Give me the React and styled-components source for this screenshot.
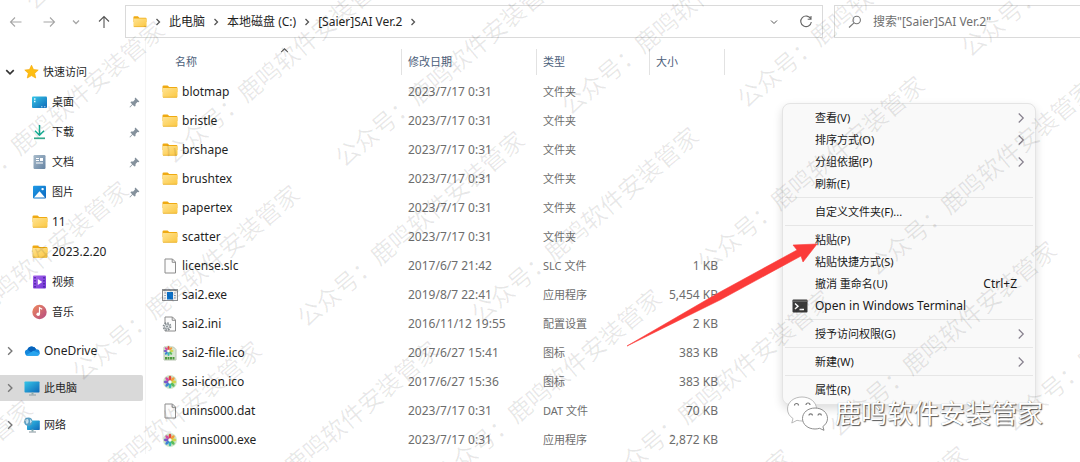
import React from 'react';
import styled, { createGlobalStyle } from 'styled-components';

const GlobalStyle = createGlobalStyle`
  *, *::before, *::after { box-sizing: border-box; }
  html, body { margin: 0; padding: 0; background: #fff; }
  body {
    font-family: "Noto Sans", "Noto Sans CJK SC", sans-serif;
    font-size: 12px;
    line-height: 16px;
    color: #1f1f1f;
  }
  button, input { font: inherit; color: inherit; }
`;

const Window = styled.div`
  position: relative;
  min-height: 100vh;
  overflow: hidden;
  background: #fff;
`;

const Toolbar = styled.header`
  display: flex;
  align-items: center;
  padding-top: 5px;
`;

const NavButtons = styled.nav`
  display: flex;
  flex: none;
  align-items: center;
  width: 125px;
  padding-left: 8px;
  gap: 16px;
`;

const IconButton = styled.button`
  display: inline-flex;
  align-items: center;
  justify-content: center;
  width: ${({ $w }) => $w || 16}px;
  height: 16px;
  padding: 0;
  border: 0;
  background: none;
  color: ${({ $color }) => $color || '#555'};
`;

const AddressBar = styled.div`
  display: flex;
  flex: 1;
  align-items: center;
  height: 33px;
  padding: 0 8px 0 7px;
  border: 1px solid #dadada;
`;

const Crumbs = styled.div`
  display: flex;
  flex: 1;
  align-items: center;
  gap: 7px;
`;

const PathIcon = styled.span`
  display: flex;
  width: 14px;
`;

const Crumb = styled.button`
  padding: 0;
  border: 0;
  background: none;
  white-space: nowrap;
`;

const BarActions = styled.div`
  display: flex;
  gap: 16px;
`;

const SearchBox = styled.label`
  display: flex;
  flex: 0 1 246px;
  align-items: center;
  gap: 10px;
  height: 33px;
  margin-left: 11px;
  padding-left: 12px;
  border: solid #dadada;
  border-width: 1px 0 1px 1px;
`;

const SearchInput = styled.input`
  flex: 1;
  min-width: 0;
  padding: 0;
  border: 0;
  outline: 0;
  background: none;
  &::placeholder { color: #6f6f6f; opacity: 1; }
`;

const Body = styled.div`
  display: flex;
  align-items: stretch;
`;

const Sidebar = styled.aside`
  flex: none;
  width: 146px;
  padding: 19px 2px 0 0;
  border-right: 1px solid #f5f5f5;
`;

const SideLink = styled.a`
  display: flex;
  align-items: center;
  gap: 4px;
  height: 30px;
  padding-left: ${({ $child }) => ($child ? 32 : 4)}px;
  padding-right: 3px;
  color: inherit;
  font-size: ${({ $latin }) => ($latin ? 12 : 11)}px;
  text-decoration: none;
`;

const RootLink = styled(SideLink)`
  height: 26px;
  margin-top: 11px;
  border-radius: 0 2px 2px 0;
  background: ${({ $active }) => ($active ? '#d9d9d9' : 'none')};
`;

const SideText = styled.span`
  flex: 1;
  white-space: nowrap;
`;

const Expander = styled.span`
  display: flex;
  justify-content: center;
  width: 12px;
  margin-right: 4px;
`;

const Files = styled.main`
  flex: 1;
  min-width: 0;
  padding-top: 9px;
`;

const FileTable = styled.table`
  width: 579px;
  table-layout: fixed;
  border-collapse: collapse;
`;

const Col = styled.col`
  width: ${({ $w }) => $w}px;
`;

const HeadCell = styled.th`
  height: 30px;
  padding: 0;
  font-size: 11px;
  font-weight: 400;
  text-align: left;
  color: #4c607a;
`;

const HeadLabel = styled.div`
  position: relative;
  height: 26px;
  padding-left: ${({ $first }) => ($first ? 29 : 6)}px;
  border-right: 1px solid #e2e2e2;
  line-height: 26px;
`;

const SortMark = styled.span`
  position: absolute;
  top: -3px;
  left: 134px;
  display: flex;
`;

const Cell = styled.td`
  height: 29px;
  padding: 0 7px 0 6px;
  font-size: ${({ $cjk }) => ($cjk ? 11 : 12)}px;
  text-align: ${({ $right }) => ($right ? 'right' : 'left')};
  white-space: nowrap;
  color: #6d6d6d;
`;

const FileName = styled.div`
  display: flex;
  align-items: center;
  gap: 4px;
  padding-left: 10px;
  color: #1f1f1f;
`;

const Menu = styled.div`
  position: absolute;
  top: 103px;
  left: 782px;
  width: 254px;
  padding: 3px 2px;
  border: 1px solid #e4e4e4;
  border-radius: 8px;
  background: #f9f9f9;
  box-shadow: 0 4px 10px rgba(0, 0, 0, 0.14);
`;

const MenuItem = styled.button`
  display: grid;
  grid-template-columns: 30px 1fr auto;
  align-items: center;
  width: 100%;
  height: 22px;
  padding: 0 ${({ $submenu }) => ($submenu ? 6 : 16)}px 0 0;
  border: 0;
  background: none;
  font-size: ${({ $latin }) => ($latin ? 12 : 11)}px;
  text-align: left;
  white-space: nowrap;
  color: #1a1a1a;
`;

const MenuIcon = styled.span`
  display: flex;
  padding-left: 7px;
`;

const Shortcut = styled.span`
  font-size: 12px;
`;

const Separator = styled.hr`
  height: 1px;
  margin: 2px 0 3px;
  border: 0;
  background: #e6e6e6;
`;

const MarkLayer = styled.div`
  position: absolute;
  inset: 0;
  overflow: hidden;
  pointer-events: none;
`;

const Mark = styled.span`
  position: absolute;
  left: ${({ $x }) => $x - 108}px;
  top: ${({ $y }) => $y - 16}px;
  font-size: 24px;
  line-height: 32px;
  white-space: nowrap;
  color: rgba(0, 0, 0, 0.09);
  transform: rotate(-40deg);
  transform-origin: 108px 16px;
`;

const Pointer = styled.svg`
  position: absolute;
  left: 626px;
  top: 243px;
`;

const Signature = styled.div`
  position: absolute;
  left: 786px;
  top: 395px;
  display: flex;
  align-items: center;
  gap: 6px;
  font-size: 26px;
  line-height: 36px;
  white-space: nowrap;
  color: #fff;
  text-shadow: 1px 1px 1px #555, 0 0 1px #999;
`;

/* ---------- icons ---------- */

const Svg = ({ w = 16, h = 16, box, children }) => (
  <svg width={w} height={h} viewBox={box || `0 0 ${w} ${h}`} fill="none" aria-hidden="true">
    {children}
  </svg>
);

const Chevron = ({ color = '#555', dir = 'right', size = 8, width = 1.3 }) => {
  const d = {
    right: 'M2.5 1 5.5 4 2.5 7',
    down: 'M1 2.5 4 5.5 7 2.5',
    up: 'M1 5.5 4 2.5 7 5.5',
  }[dir];
  return (
    <Svg w={size} h={size} box="0 0 8 8">
      <path d={d} stroke={color} strokeWidth={width} />
    </Svg>
  );
};

const ArrowIcon = ({ d }) => (
  <Svg>
    <path d={d} stroke="currentColor" strokeWidth="1.1" />
  </Svg>
);

const Folder = () => (
  <Svg>
    <path d="M.5 2.7Q.5 1.5 1.7 1.5H5.6L7.2 3H14.4Q15.4 3 15.4 4V8H.5Z" fill="#efaa12" />
    <rect x=".5" y="4" width="15" height="9.6" rx="1" fill="url(#folder)" />
    <path d="M1 13.3H15" stroke="#eab02c" strokeWidth=".8" />
  </Svg>
);

const Star = () => (
  <Svg w={15}>
    <path d="M7.5 1.2 9.5 5.6 14.2 6.1 10.7 9.3 11.7 14 7.5 11.6 3.3 14 4.3 9.3.8 6.1 5.5 5.6Z" fill="#fdbe12" stroke="#f6ab0a" strokeWidth=".7" strokeLinejoin="round" />
  </Svg>
);

const Desktop = () => (
  <Svg>
    <rect x="0" y="2.5" width="15" height="11.5" rx="1" fill="url(#blue)" />
    <path d="M2 5H3.5M2 7.5H3.5" stroke="#e4fbff" strokeWidth="1.3" />
    <path d="M9 12.8H10.5M12 12.8H13.5" stroke="#b5d9f5" />
  </Svg>
);

const Download = () => (
  <Svg>
    <path d="M7.5 1V11M3 6.7 7.5 11.2 12 6.7" stroke="#15ae94" strokeWidth="1.5" />
    <path d="M2 14.3H13" stroke="#36a88c" strokeWidth="1.7" />
  </Svg>
);

const Documents = () => (
  <Svg>
    <rect x="1.5" y="1" width="12" height="14" rx="1.2" fill="url(#slate)" />
    <path d="M4 4.5H7M4 6.5H7M4 9H11" stroke="#fff" />
    <rect x="8" y="4" width="3" height="3" fill="#fff" />
  </Svg>
);

const Pictures = () => (
  <Svg>
    <rect x="1" y="1.8" width="13" height="12.6" rx="1" fill="url(#picture)" />
    <path d="M2 13.5 7.5 7.2 13 13.5Z" fill="#fff" />
    <circle cx="10.6" cy="5.1" r="1.2" fill="#fff" />
  </Svg>
);

const Video = () => (
  <Svg>
    <rect x="1" y="1.5" width="13" height="13" rx="1" fill="url(#violet)" />
    <path d="M3 3V13.5M12 3V13.5" stroke="#40219a" strokeWidth="1.4" strokeDasharray="1.5 1.5" />
    <path d="M5.8 5V11L10.3 8Z" fill="#fff" />
  </Svg>
);

const Music = () => (
  <Svg>
    <circle cx="7.5" cy="8" r="7.2" fill="url(#music)" />
    <circle cx="6.2" cy="10.2" r="1.8" fill="#fff" />
    <path d="M7.5 10V3.8L10.2 5.2" stroke="#fff" strokeWidth="1.2" />
  </Svg>
);

const Cloud = () => (
  <Svg>
    <path d="M3.7 12.8A3.2 3.2 0 0 1 3.4 6.5 4.8 4.8 0 0 1 12.2 6.2 3.3 3.3 0 0 1 12.6 12.8Z" fill="#1487dc" />
    <path d="M3.4 6.5A4.8 4.8 0 0 1 12.2 6.2L7.5 9.6Z" fill="#0762bb" />
    <path d="M2 12.3 9.4 7.7 15.6 10.2A2.8 2.8 0 0 1 12.6 12.8H3.8Q2.8 12.8 2 12.3Z" fill="#28a5ef" />
  </Svg>
);

const Monitor = ({ globe }) => (
  <Svg>
    <rect x={globe ? 3 : 0.5} y={globe ? 3.5 : 1.5} width={globe ? 12.8 : 15} height={globe ? 9.5 : 11} rx=".7" fill="url(#blue)" />
    <path d="M8.5 12.5V14.6" stroke="#8aa" strokeWidth="2" />
    <path d="M5 15H12" stroke="#9aa7ae" strokeWidth="1.2" />
    {globe && (
      <>
        <circle cx="4.3" cy="4.7" r="4.1" fill="#5b9fc4" />
        <path d="M1 3Q4 1 4.5 3.5T2.5 7ZM6 2 8 4.5 6 6.5Z" fill="#c9e2ee" />
      </>
    )}
  </Svg>
);

const Pin = () => (
  <Svg w={11} h={11} box="0 0 11 11">
    <path d="M6.4.6 10.4 4.6 9.4 5.3 8.4 5 6.6 6.9 6.5 9 5.5 9.6 3.6 7.7 1 10.6.5 10.1 3.2 7.3 1.4 5.4 2.2 4.5 4.2 4.4 6 2.6 5.7 1.5Z" fill="#85919c" />
  </Svg>
);

const FileIcon = ({ gear }) => (
  <Svg>
    <path d="M3 1H10.5L13.5 4V15H3Z" fill="#fcfcfc" stroke="#8c8c8c" />
    <path d="M10.2 1V4.3H13.5" stroke="#8c8c8c" />
    {gear && (
      <>
        <circle cx="5" cy="10.5" r="3.6" fill="#fff" stroke="#7f878c" strokeWidth="1.5" strokeDasharray="1.6 1.2" />
        <circle cx="5" cy="10.5" r="2.5" fill="#e4e8ea" stroke="#7f878c" strokeWidth=".8" />
        <circle cx="5" cy="10.5" r=".9" fill="#7f878c" />
      </>
    )}
  </Svg>
);

const Program = () => (
  <Svg>
    <rect x=".5" y="2.5" width="15" height="11" fill="#f4f4f4" stroke="#8c8f92" />
    <path d="M1 3.5H15" stroke="#8c8f92" />
    <rect x="5" y="5" width="6" height="7.5" fill="#0b70c8" />
    <path d="M2.2 6H4M2.2 8.5H4M2.2 11H4M12 6H13.8M12 8.5H13.8M12 11H13.8" stroke="#9aa4ab" />
  </Svg>
);

const petals = ['#e5473e', '#f39b3b', '#cfd54a', '#5cbd59', '#38b8b0', '#3f83d6', '#7b57c7', '#cf4ea5'];

const Wheel = ({ file }) => (
  <Svg>
    {file && <path d="M2 2H11.5L14 4.5V15H2Z" fill="#d9e6d2" stroke="#b8c4b2" />}
    <circle cx={file ? 6.5 : 8} cy={file ? 6 : 8} r={file ? 5.4 : 7} fill="#cfe4c8" />
    <g transform={file ? 'translate(6.5 6) scale(.8)' : 'translate(8 8)'}>
      {petals.map((color, i) => (
        <ellipse key={color} cx="0" cy="-3.9" rx="1.4" ry="2.3" fill={color} transform={`rotate(${i * 45})`} />
      ))}
      <circle r="1.3" fill="#fff" />
    </g>
    {file && <path d="M3 13.2H13" stroke="#4f9a3d" strokeWidth="2.4" strokeDasharray="2 .5" />}
  </Svg>
);

const Terminal = () => (
  <Svg>
    <rect x=".5" y="1.5" width="15" height="13" rx="1" fill="#3a3a3a" />
    <path d="M.5 3.2H15.5" stroke="#777" />
    <path d="M3 5.5 6 8.2 3 11M7.5 11.5H12" stroke="#fff" strokeWidth="1.4" />
  </Svg>
);

const PaintDefs = styled.svg`
  position: absolute;
`;

const SharedPaint = () => (
  <PaintDefs width="0" height="0" aria-hidden="true">
    <defs>
      {[
        ['folder', '#ffe391', '#fbc741'],
        ['blue', '#35c6e8', '#0f68b8'],
        ['slate', '#a9bccb', '#6583a3'],
        ['picture', '#1f9ae6', '#0b68c0'],
        ['violet', '#a563ea', '#7336d6'],
        ['music', '#f08a5c', '#b44b84'],
      ].map(([id, from, to]) => (
        <linearGradient key={id} id={id} x1="0" y1="0" x2="1" y2="1">
          <stop stopColor={from} />
          <stop offset="1" stopColor={to} />
        </linearGradient>
      ))}
    </defs>
  </PaintDefs>
);

const WeChat = () => (
  <Svg w={43} h={36}>
    <path d="M16 2C8 2 1.5 7 1.5 14 1.5 18 3.6 21.3 7 23.5L5.8 28 11 25.3Q13.5 26 16 26C24 26 30.5 21 30.5 14S24 2 16 2Z" fill="#fff" stroke="#a8a8a8" strokeWidth=".8" />
    <path d="M29 13C22 13 16.5 17.5 16.5 23.5S22 34 29 34Q31.4 34 33.5 33.3L38 35.3 36.9 31.5C39.7 29.6 41.5 26.8 41.5 23.5 41.5 17.5 36 13 29 13Z" fill="#fff" stroke="#808080" strokeWidth=".9" />
    <path d="M8.5 10.5A2 2 0 1 1 12.5 10.5M20 10A2 2 0 1 1 24 10M23 20.5A1.7 1.7 0 1 1 26.4 20.5M32 20.5A1.7 1.7 0 1 1 35.4 20.5" stroke="#777" strokeWidth="1.2" />
  </Svg>
);

/* ---------- data ---------- */

const quickLinks = [
  { text: '桌面', icon: <Desktop />, pinned: true },
  { text: '下载', icon: <Download />, pinned: true },
  { text: '文档', icon: <Documents />, pinned: true },
  { text: '图片', icon: <Pictures />, pinned: true },
  { text: '11', icon: <Folder />, latin: true },
  { text: '2023.2.20', icon: <Folder />, latin: true },
  { text: '视频', icon: <Video /> },
  { text: '音乐', icon: <Music /> },
];

const roots = [
  { text: 'OneDrive', icon: <Cloud />, latin: true },
  { text: '此电脑', icon: <Monitor />, active: true },
  { text: '网络', icon: <Monitor globe /> },
];

const files = [
  ['blotmap', <Folder />, '2023/7/17 0:31', '文件夹', ''],
  ['bristle', <Folder />, '2023/7/17 0:31', '文件夹', ''],
  ['brshape', <Folder />, '2023/7/17 0:31', '文件夹', ''],
  ['brushtex', <Folder />, '2023/7/17 0:31', '文件夹', ''],
  ['papertex', <Folder />, '2023/7/17 0:31', '文件夹', ''],
  ['scatter', <Folder />, '2023/7/17 0:31', '文件夹', ''],
  ['license.slc', <FileIcon />, '2017/6/7 21:42', 'SLC 文件', '1 KB'],
  ['sai2.exe', <Program />, '2019/8/7 22:41', '应用程序', '5,454 KB'],
  ['sai2.ini', <FileIcon gear />, '2016/11/12 19:55', '配置设置', '2 KB'],
  ['sai2-file.ico', <Wheel file />, '2017/6/27 15:41', '图标', '383 KB'],
  ['sai-icon.ico', <Wheel />, '2017/6/27 15:36', '图标', '383 KB'],
  ['unins000.dat', <FileIcon />, '2023/7/17 0:31', 'DAT 文件', '70 KB'],
  ['unins000.exe', <Wheel />, '2023/7/17 0:31', '应用程序', '2,872 KB'],
];

const menuGroups = [
  [
    { text: '查看(V)', submenu: true },
    { text: '排序方式(O)', submenu: true },
    { text: '分组依据(P)', submenu: true },
    { text: '刷新(E)' },
  ],
  [{ text: '自定义文件夹(F)...' }],
  [
    { text: '粘贴(P)' },
    { text: '粘贴快捷方式(S)' },
    { text: '撤消 重命名(U)', shortcut: 'Ctrl+Z' },
    { text: 'Open in Windows Terminal', icon: <Terminal />, latin: true },
  ],
  [{ text: '授予访问权限(G)', submenu: true }],
  [{ text: '新建(W)', submenu: true }],
  [{ text: '属性(R)' }],
];

const marks = [
  [111, -65], [23, 142], [250, 89], [421, 92], [647, 40], [823, 33], [1047, -18],
  [-13, 302], [158, 306], [383, 252], [557, 248], [783, 197], [953, 201],
  [-109, 521], [120, 462], [297, 462], [520, 410], [690, 411], [915, 362], [1090, 357],
  [650, 570], [826, 567],
];

export default function App() {
  return (
    <Window>
      <GlobalStyle />
      <SharedPaint />
      <Toolbar>
        <NavButtons aria-label="导航">
          <IconButton aria-label="后退" $color="#a6a6a6"><ArrowIcon d="M7 3.5 2.5 8 7 12.5M2.5 8H13.5" /></IconButton>
          <IconButton aria-label="前进" $color="#a6a6a6"><ArrowIcon d="M10 3.5 14.5 8 10 12.5M14.5 8H3.5" /></IconButton>
          <IconButton aria-label="最近" $w={8}><Chevron dir="down" color="#a6a6a6" /></IconButton>
          <IconButton aria-label="上移"><ArrowIcon d="M3 7.5 8 2.5 13 7.5M8 2.5V14" /></IconButton>
        </NavButtons>
        <AddressBar>
          <Crumbs>
            <PathIcon><Folder /></PathIcon>
            <Chevron />
            <Crumb>此电脑</Crumb>
            <Chevron />
            <Crumb>本地磁盘 (C:)</Crumb>
            <Chevron />
            <Crumb>[Saier]SAI Ver.2</Crumb>
            <Chevron />
          </Crumbs>
          <BarActions>
            <IconButton aria-label="展开"><Chevron dir="down" width={1} /></IconButton>
            <IconButton aria-label="刷新">
              <Svg><path d="M12.8 5A5.3 5.3 0 1 0 13.3 8M13 2V5.3H9.7" stroke="#666" strokeWidth="1.1" /></Svg>
            </IconButton>
          </BarActions>
        </AddressBar>
        <SearchBox>
          <Svg><circle cx="9.7" cy="6" r="3.7" stroke="#777" strokeWidth="1.1" /><path d="M7 8.8 2 13.5" stroke="#777" strokeWidth="1.1" /></Svg>
          <SearchInput aria-label="搜索" placeholder={'搜索"[Saier]SAI Ver.2"'} />
        </SearchBox>
      </Toolbar>

      <Body>
        <Sidebar>
          <SideLink href="#quick">
            <Expander><Chevron dir="down" color="#333" size={10} /></Expander>
            <Star />
            <SideText>快速访问</SideText>
          </SideLink>
          {quickLinks.map((l) => (
            <SideLink key={l.text} href="#item" $child $latin={l.latin}>
              {l.icon}
              <SideText>{l.text}</SideText>
              {l.pinned && <Pin />}
            </SideLink>
          ))}
          {roots.map((r) => (
            <RootLink key={r.text} href="#root" $active={r.active} $latin={r.latin}>
              <Expander><Chevron color="#777" size={10} width={1.1} /></Expander>
              {r.icon}
              <SideText>{r.text}</SideText>
            </RootLink>
          ))}
        </Sidebar>

        <Files>
          <FileTable>
            <colgroup>
              <Col $w={256} /><Col $w={135} /><Col $w={113} /><Col $w={75} />
            </colgroup>
            <thead>
              <tr>
                <HeadCell scope="col">
                  <HeadLabel $first>名称<SortMark><Chevron dir="up" size={9} width={0.9} /></SortMark></HeadLabel>
                </HeadCell>
                <HeadCell scope="col"><HeadLabel>修改日期</HeadLabel></HeadCell>
                <HeadCell scope="col"><HeadLabel>类型</HeadLabel></HeadCell>
                <HeadCell scope="col"><HeadLabel>大小</HeadLabel></HeadCell>
              </tr>
            </thead>
            <tbody>
              {files.map(([name, icon, date, type, size]) => (
                <tr key={name}>
                  <Cell><FileName>{icon}{name}</FileName></Cell>
                  <Cell>{date}</Cell>
                  <Cell $cjk>{type}</Cell>
                  <Cell $right>{size}</Cell>
                </tr>
              ))}
            </tbody>
          </FileTable>
        </Files>
      </Body>

      <Menu role="menu">
        {menuGroups.map((group, i) => (
          <React.Fragment key={group[0].text}>
            {i > 0 && <Separator />}
            {group.map((item) => (
              <MenuItem key={item.text} role="menuitem" $latin={item.latin} $submenu={item.submenu}>
                <MenuIcon>{item.icon}</MenuIcon>
                <span>{item.text}</span>
                {item.submenu && <Chevron size={12} width={0.8} color="#857f8c" />}
                {item.shortcut && <Shortcut>{item.shortcut}</Shortcut>}
              </MenuItem>
            ))}
          </React.Fragment>
        ))}
      </Menu>

      <MarkLayer aria-hidden="true">
        {marks.map(([x, y]) => (
          <Mark key={`${x},${y}`} $x={x} $y={y}>公众号：鹿鸣软件安装管家</Mark>
        ))}
      </MarkLayer>

      <Pointer width="192" height="104" viewBox="0 0 192 104" aria-hidden="true">
        <path d="M1 103 94 49 171 7 167 2 191 1 177 19 175 13 94 57Z" fill="#fb3b39" stroke="#fb3b39" strokeLinejoin="round" strokeWidth=".6" />
      </Pointer>

      <Signature>
        <WeChat />
        鹿鸣软件安装管家
      </Signature>
    </Window>
  );
}
